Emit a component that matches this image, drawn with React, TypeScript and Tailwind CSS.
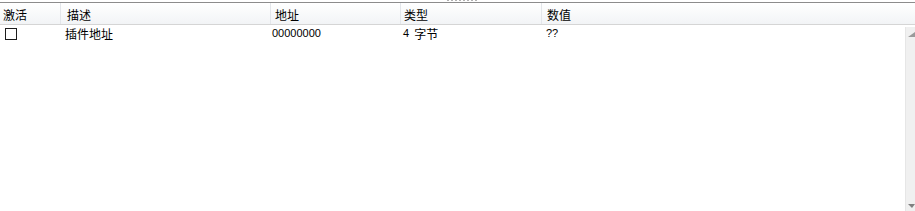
const columns = [
  { label: '激活', w: 'w-[61px]', pl: 'pl-[3px]' },
  { label: '描述', w: 'w-[210px]', pl: 'pl-[6px]' },
  { label: '地址', w: 'w-[130px]', pl: 'pl-[4px]' },
  { label: '类型', w: 'w-[141px]', pl: 'pl-[3px]' },
  { label: '数值', w: 'flex-1', pl: 'pl-[5px]' },
]

const font = { fontFamily: '"Noto Sans CJK SC", "Liberation Sans", sans-serif' }

export default function App() {
  return (
    <div className="w-[915px] h-[211px] bg-white flex flex-col overflow-hidden text-black" style={font}>
      {/* splitter */}
      <div className="h-[3px] flex justify-center items-start border-b border-[#8c8c8c] bg-white">
        <div className="ml-[8px] flex gap-[2px]">
          {Array.from({ length: 8 }).map((_, i) => (
            <span key={i} className="w-[2px] h-[1px] bg-[#b0b0b0]" />
          ))}
        </div>
      </div>

      {/* header */}
      <div className="h-[22px] flex border-b border-[#d5d5d5] bg-gradient-to-b from-white to-[#f2f4f6]">
        {columns.map((c, i) => (
          <div
            key={c.label}
            className={`${c.w} ${c.pl} flex items-end pb-[3px] text-[12px] leading-none ${i < columns.length - 1 ? 'border-r border-[#e3e6ea]' : ''}`}
          >
            {c.label}
          </div>
        ))}
      </div>

      {/* body */}
      <div className="flex-1 flex">
        <div className="flex-1 pt-[2px]">
          <div className="h-[13px] flex items-center text-[12px] leading-none">
            <div className="w-[61px] pl-[5px] flex items-center">
              <span className="w-[12px] h-[12px] border border-[#1c1c1c] bg-white" />
            </div>
            <div className="w-[210px] pl-[4px]">插件地址</div>
            <div
              className="w-[130px] pl-[1px] text-[11px]"
              style={{ fontFamily: '"Liberation Sans", sans-serif' }}
            >
              00000000
            </div>
            <div className="w-[141px] pl-[2px] flex items-center gap-[5px]">
              <span className="text-[11px]" style={{ fontFamily: '"Liberation Sans", sans-serif' }}>4</span>
              <span>字节</span>
            </div>
            <div
              className="flex-1 pl-[4px] text-[11px]"
              style={{ fontFamily: '"Liberation Sans", sans-serif' }}
            >
              ??
            </div>
          </div>
        </div>
        {/* scrollbar (partially visible) */}
        <div className="w-[10px] mt-[2px] bg-[#f0f0f0] border-l border-[#e6e6e6] flex flex-col justify-between items-end pt-[5px] pb-[3px]">
          <svg width="7" height="5" viewBox="0 0 7 5">
            <path d="M0 5 L7 0 L7 5 Z" fill="#9a9a9a" />
          </svg>
          <svg width="7" height="4" viewBox="0 0 7 4">
            <path d="M0 0 H7 L4 4 Z" fill="#808080" />
          </svg>
        </div>
      </div>
    </div>
  )
}
